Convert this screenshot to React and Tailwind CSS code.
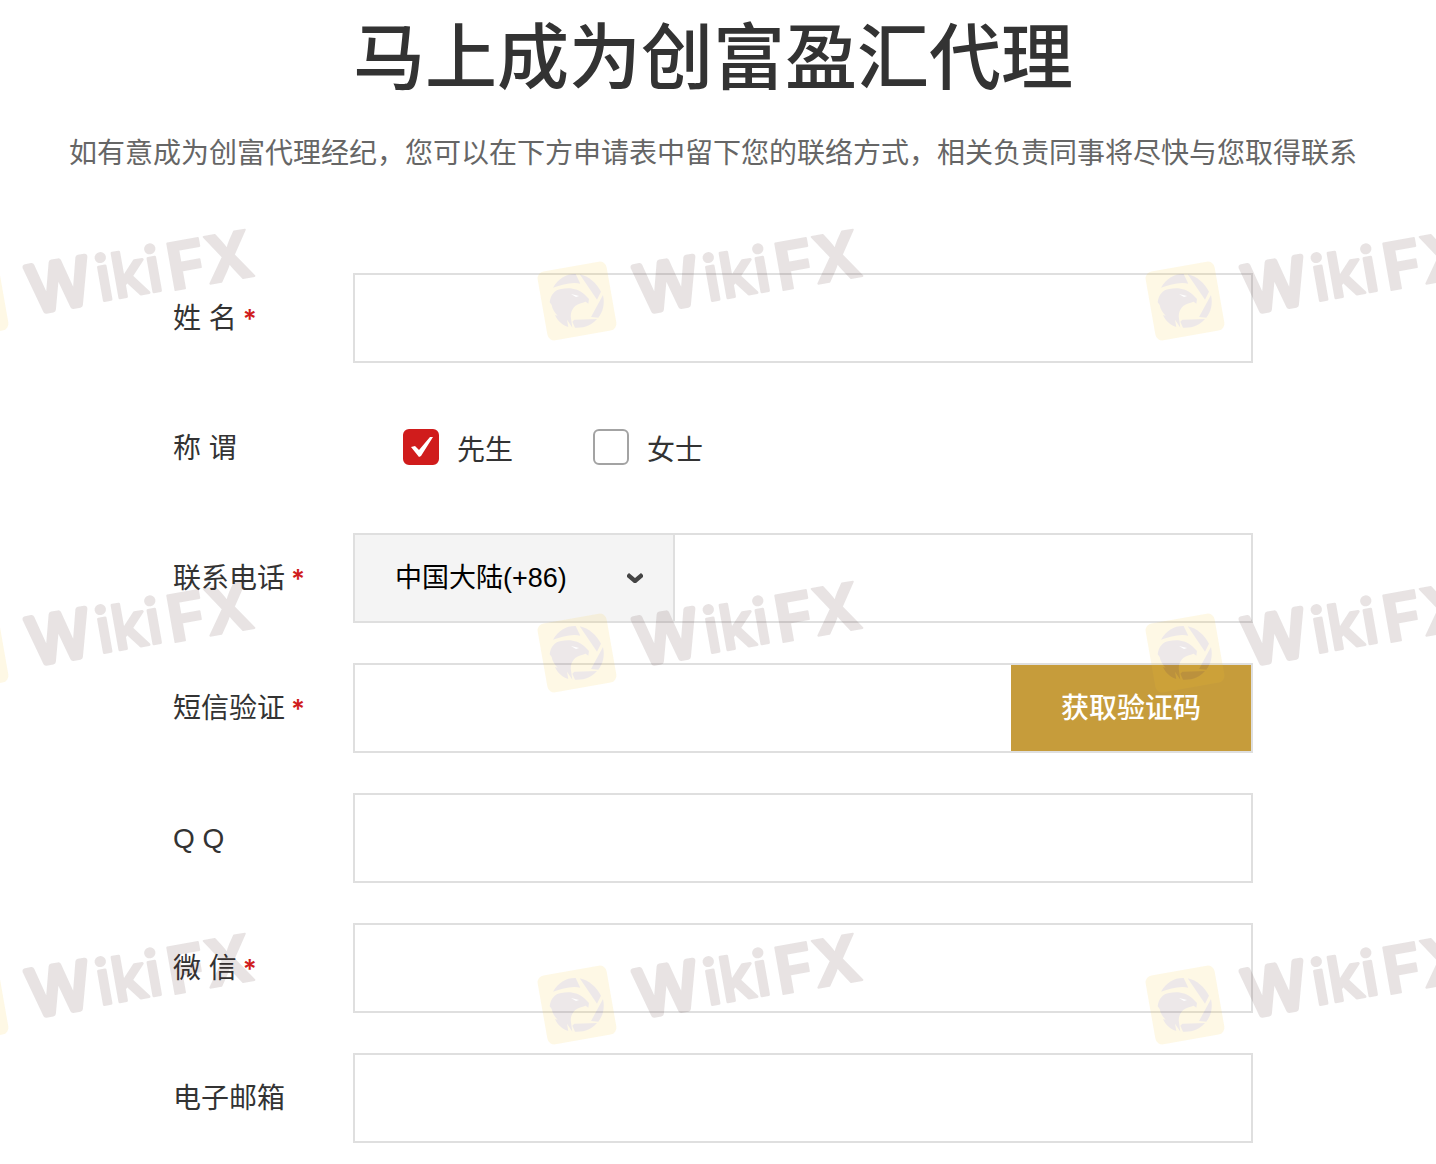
import React, { useState } from 'react';

const fields = [
  { id: 'name', label: '姓 名', required: true, type: 'text' },
  { id: 'title', label: '称 谓', type: 'title' },
  { id: 'phone', label: '联系电话', required: true, type: 'phone' },
  { id: 'sms', label: '短信验证', required: true, type: 'sms' },
  { id: 'qq', label: 'Q Q', type: 'text' },
  { id: 'wechat', label: '微 信', required: true, type: 'text' },
  { id: 'email', label: '电子邮箱', type: 'email' },
];

const boxClass = 'flex h-[90px] border-2 border-[#dfdfdf]';
const inputClass = 'h-full min-w-0 flex-1 bg-transparent px-10 outline-none';

const Watermark = () => (
  <svg className="pointer-events-none absolute inset-0 h-full w-full" aria-hidden="true">
    <defs>
      <pattern id="mark" x="518" y="181" width="608" height="352" patternUnits="userSpaceOnUse">
        <g opacity="0.12" transform="translate(59 120)">
          <rect x="-35" y="-35" width="70" height="70" rx="7" fill="#f5c628" transform="rotate(-10)" />
          {/* shutter ring */}
          <g fill="#6a4048" transform="scale(0.3333)">
            <path d="M-72 -40 C-56 -68 -32 -82 -4 -81 L10 -52 C-14 -58 -44 -50 -72 -40Z" />
            <path d="M8 -80 C36 -74 58 -54 72 -28 L60 -4Z" />
            <path d="M78 -18 C84 8 78 32 64 50 L42 48Z" />
            <path d="M-8 56 L60 54 C44 72 22 82 -6 80 L-14 62Z" />
            {/* eagle head */}
            <path d="M-82 4 C-80 -18 -66 -34 -48 -36 C-20 -42 6 -36 22 -20 L36 -6 L34 8 L26 2 C14 6 4 8 -4 14 C-16 24 -20 38 -18 52 L-14 80 L-30 56 L-26 78 C-44 72 -58 60 -66 42 L-58 44 C-68 34 -74 24 -76 12Z" />
          </g>
          <path d="M-6 -7 L2 -5 L-1 -4Z" fill="#fff" />
          <g fill="#3a1818" stroke="#3a1818" transform="rotate(-10)" strokeLinejoin="round" fontFamily="Inter, sans-serif">
            <text x="60" y="23" fontWeight="400" fontSize="64" strokeWidth="6">W</text>
            <text x="129" y="23" fontWeight="500" fontSize="62" strokeWidth="3">iki</text>
            <text x="201" y="25" fontWeight="700" fontSize="65" strokeWidth="2">FX</text>
          </g>
        </g>
      </pattern>
    </defs>
    <rect width="100%" height="100%" fill="url(#mark)" />
  </svg>
);

const TitleOption = ({ value, text, checked, onChange }) => (
  <label className="flex items-center">
    <span className="relative block size-9">
      <input
        type="radio"
        name="title"
        value={value}
        checked={checked}
        onChange={onChange}
        className="block size-9 appearance-none rounded-md border-2 border-[#a3a3a3] bg-white checked:border-[#d01c1c] checked:bg-[#d01c1c]"
      />
      {checked && (
        <svg viewBox="0 0 36 36" className="pointer-events-none absolute inset-0 size-9" aria-hidden="true">
          <path d="M8 18 L12 17 L16 21 L27 8 L30 8 L18 27 L16 28Z" fill="#fff" />
        </svg>
      )}
    </span>
    <span className="ml-[18px] pt-2">{text}</span>
  </label>
);

const Field = ({ field }) => {
  const [title, setTitle] = useState('mr');

  if (field.type === 'title') {
    return (
      <div className="flex h-[90px] items-center gap-20 pb-0.5 pl-[50px]" role="radiogroup" aria-labelledby="title-label">
        <TitleOption value="mr" text="先生" checked={title === 'mr'} onChange={() => setTitle('mr')} />
        <TitleOption value="ms" text="女士" checked={title === 'ms'} onChange={() => setTitle('ms')} />
      </div>
    );
  }

  if (field.type === 'phone') {
    return (
      <div className={boxClass}>
        <div className="relative w-80 shrink-0 border-r-2 border-[#dfdfdf] bg-[#f4f4f4]">
          <select
            aria-label="国家区号"
            className="h-full w-full appearance-none bg-transparent pl-10 text-[27px] text-black outline-none"
          >
            <option>中国大陆(+86)</option>
          </select>
          <svg
            viewBox="0 0 18 12"
            className="pointer-events-none absolute top-[37px] right-[29px] h-3 w-[18px]"
            aria-hidden="true"
          >
            <path d="M1 3 L3 1 L9 6 L15 1 L17 3 L17 5 L10 11 L8 11 L1 5Z" fill="#444" />
          </svg>
        </div>
        <input id={field.id} type="tel" className={inputClass} />
      </div>
    );
  }

  if (field.type === 'sms') {
    return (
      <div className={boxClass}>
        <input id={field.id} type="text" className={inputClass} />
        <button type="button" className="w-60 shrink-0 bg-[#c69c3b] pt-0.5 font-medium text-white">
          获取验证码
        </button>
      </div>
    );
  }

  return (
    <div className={boxClass}>
      <input id={field.id} type={field.type} className={inputClass} />
    </div>
  );
};

const App = () => {
  return (
    <main className="relative min-h-screen overflow-hidden bg-white pt-5 pr-[10px] pb-5 font-['Liberation_Sans','Noto_Sans_CJK_SC',sans-serif] text-[28px] leading-10 text-[#333]">
      <h1 className="text-center text-[72px] leading-[76px] font-medium">马上成为创富盈汇代理</h1>
      <p className="mt-[38px] text-center text-[#666]">
        如有意成为创富代理经纪，您可以在下方申请表中留下您的联络方式，相关负责同事将尽快与您取得联系
      </p>

      <form className="mx-auto mt-[99px] max-w-[1080px] space-y-10">
        {fields.map((field) => (
          <div key={field.id} className="flex items-center">
            <label
              id={`${field.id}-label`}
              htmlFor={field.type === 'title' ? undefined : field.id}
              className="w-[180px] shrink-0 pt-0.5"
            >
              {field.label}
              {field.required && (
                <span className="ml-1.5 font-['Inter',sans-serif] text-[26px] font-semibold text-[#d01c1c]">*</span>
              )}
            </label>
            <div className="min-w-0 flex-1">
              <Field field={field} />
            </div>
          </div>
        ))}
      </form>

      <Watermark />
    </main>
  );
};

export default App;
